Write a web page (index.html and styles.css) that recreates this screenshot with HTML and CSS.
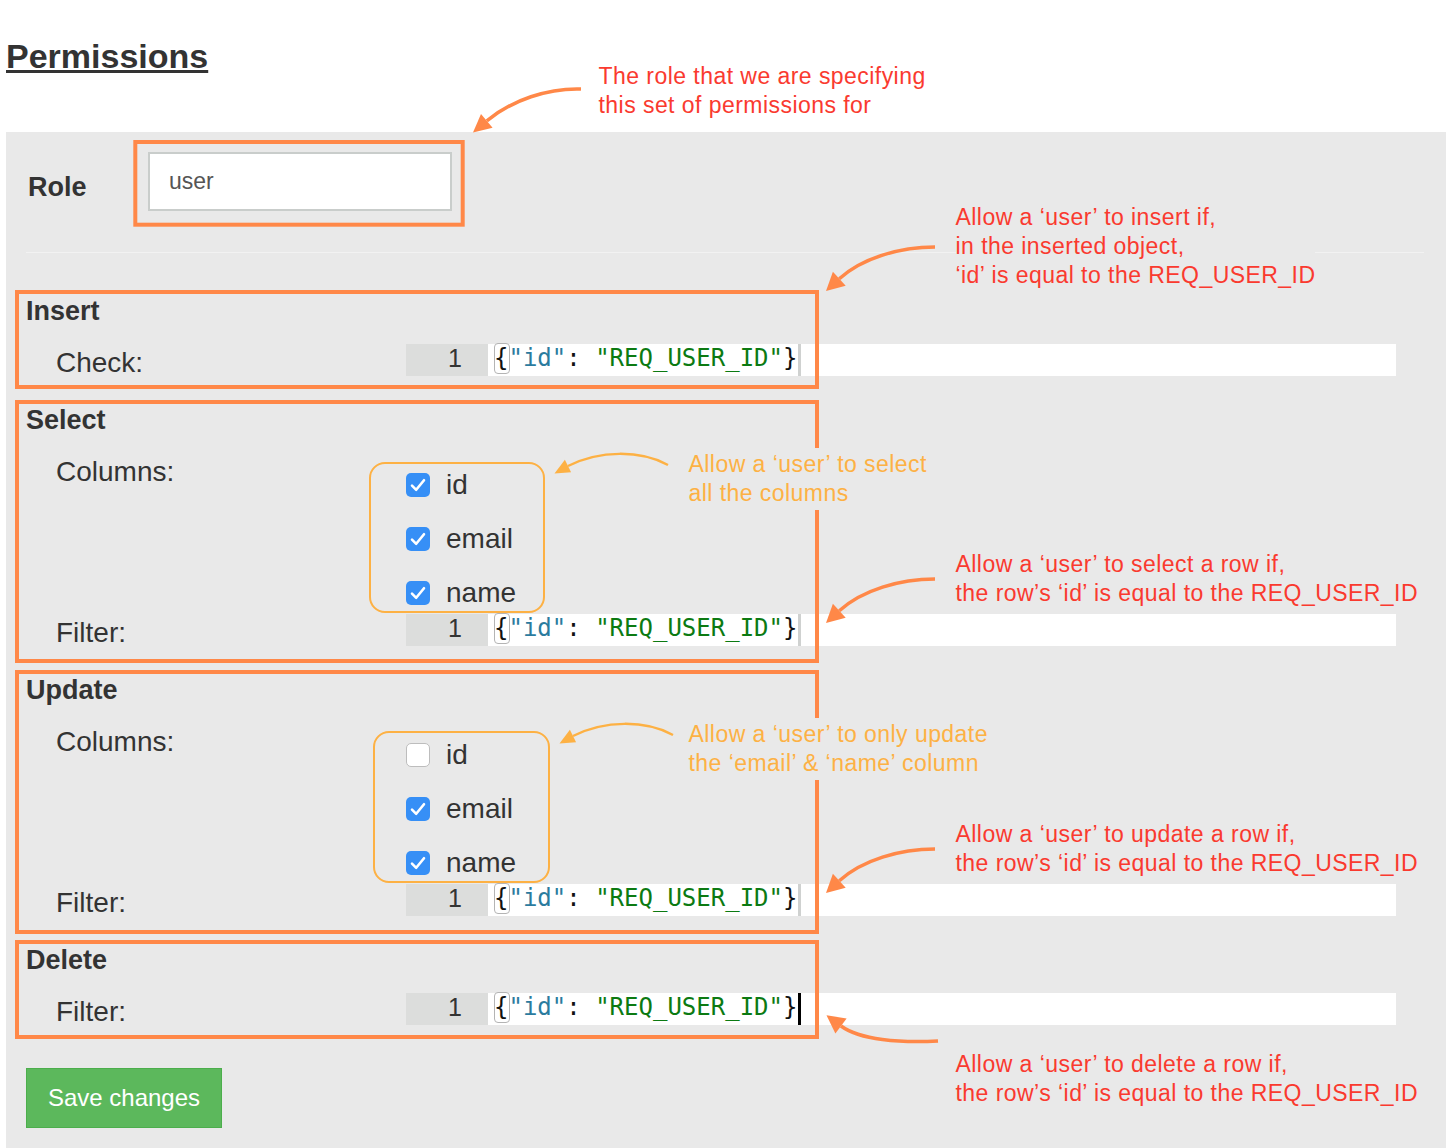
FILE: index.html
```html
<!DOCTYPE html>
<html lang="en">
<head>
<meta charset="utf-8">
<title>Permissions</title>
<link rel="stylesheet" href="styles.css">
</head>
<body>
<h1 class="page-title">Permissions</h1>

<form class="panel">
  <div class="role-row">
    <label class="role-label" for="role">Role</label>
    <input class="role-input" id="role" type="text" value="user">
  </div>
  <hr class="sep">

  <section class="perm perm-first">
    <h2 class="perm-title">Insert</h2>
    <div class="fields">
      <div class="field">
        <span class="field-label">Check:</span>
        <div class="editor">
          <div class="gutter">1</div>
          <div class="code"><span class="bracket">{</span><span class="prop">"id"</span>: <span class="str">"REQ_USER_ID"</span>}<span class="cursor"></span></div>
        </div>
      </div>
    </div>
  </section>

  <section class="perm">
    <h2 class="perm-title">Select</h2>
    <div class="fields">
      <div class="field">
        <span class="field-label">Columns:</span>
        <ul class="checks">
          <li class="check"><span class="box"><svg width="24" height="24" viewBox="0 0 24 24"><path d="M6 12.6 L10.2 16.8 L18 7.2" fill="none" stroke="#fff" stroke-width="2.6" stroke-linecap="round" stroke-linejoin="round"/></svg></span>id</li>
          <li class="check"><span class="box"><svg width="24" height="24" viewBox="0 0 24 24"><path d="M6 12.6 L10.2 16.8 L18 7.2" fill="none" stroke="#fff" stroke-width="2.6" stroke-linecap="round" stroke-linejoin="round"/></svg></span>email</li>
          <li class="check"><span class="box"><svg width="24" height="24" viewBox="0 0 24 24"><path d="M6 12.6 L10.2 16.8 L18 7.2" fill="none" stroke="#fff" stroke-width="2.6" stroke-linecap="round" stroke-linejoin="round"/></svg></span>name</li>
        </ul>
      </div>
      <div class="field">
        <span class="field-label">Filter:</span>
        <div class="editor">
          <div class="gutter">1</div>
          <div class="code"><span class="bracket">{</span><span class="prop">"id"</span>: <span class="str">"REQ_USER_ID"</span>}<span class="cursor"></span></div>
        </div>
      </div>
    </div>
  </section>

  <section class="perm">
    <h2 class="perm-title">Update</h2>
    <div class="fields">
      <div class="field">
        <span class="field-label">Columns:</span>
        <ul class="checks">
          <li class="check"><span class="box box-off"></span>id</li>
          <li class="check"><span class="box"><svg width="24" height="24" viewBox="0 0 24 24"><path d="M6 12.6 L10.2 16.8 L18 7.2" fill="none" stroke="#fff" stroke-width="2.6" stroke-linecap="round" stroke-linejoin="round"/></svg></span>email</li>
          <li class="check"><span class="box"><svg width="24" height="24" viewBox="0 0 24 24"><path d="M6 12.6 L10.2 16.8 L18 7.2" fill="none" stroke="#fff" stroke-width="2.6" stroke-linecap="round" stroke-linejoin="round"/></svg></span>name</li>
        </ul>
      </div>
      <div class="field">
        <span class="field-label">Filter:</span>
        <div class="editor">
          <div class="gutter">1</div>
          <div class="code"><span class="bracket">{</span><span class="prop">"id"</span>: <span class="str">"REQ_USER_ID"</span>}<span class="cursor"></span></div>
        </div>
      </div>
    </div>
  </section>

  <section class="perm">
    <h2 class="perm-title">Delete</h2>
    <div class="fields">
      <div class="field">
        <span class="field-label">Filter:</span>
        <div class="editor">
          <div class="gutter">1</div>
          <div class="code"><span class="bracket">{</span><span class="prop">"id"</span>: <span class="str">"REQ_USER_ID"</span>}<span class="cursor cursor-active"></span></div>
        </div>
      </div>
    </div>
  </section>

  <button class="save" type="button">Save changes</button>
</form>

<div class="overlay">
  <svg class="marks" width="1446" height="1148" viewBox="0 0 1446 1148">
    <g fill="none" stroke="#ff8848" stroke-width="4">
      <rect x="135.3" y="142" width="327.4" height="82.7"/>
      <rect x="17" y="292" width="800" height="95"/>
      <rect x="17" y="402" width="800" height="259"/>
      <rect x="17" y="672" width="800" height="260"/>
      <rect x="17" y="942" width="800" height="95"/>
    </g>
    <g fill="none" stroke="#fdb144" stroke-width="2">
      <rect x="370" y="463" width="174" height="149" rx="15"/>
      <rect x="374" y="732" width="175" height="150" rx="15"/>
    </g>
    <g fill="none" stroke="#ff8848" stroke-width="3.5">
      <path d="M581 89 C548 88 512 100 486.8 120.9"/>
      <path d="M935 247 C900 247 862 258 839.3 278.8"/>
      <path d="M935 579 C900 579 862 590 839.3 610.8"/>
      <path d="M935 849 C900 849 862 860 839.3 880.8"/>
      <path d="M938 1041 C900 1043 860 1040 841 1026"/>
    </g>
    <g fill="#ff8848">
      <polygon points="473,132.5 481,114 492.6,127.8"/>
      <polygon points="826,291 832.9,271.8 845.7,285.8"/>
      <polygon points="826,623 832.9,603.8 845.7,617.8"/>
      <polygon points="826,893 832.9,873.8 845.7,887.8"/>
      <polygon points="826.5,1015.3 846.6,1018.4 835.4,1033.6"/>
    </g>
    <g fill="none" stroke="#fdb144" stroke-width="2.5">
      <path d="M668 465 C640 450 600 450 568 466"/>
      <path d="M673 735 C645 720 605 720 573 736"/>
    </g>
    <g fill="#fdb144">
      <polygon points="554.5,473.5 564.9,459.7 571.1,472.3"/>
      <polygon points="559.5,743.5 569.9,729.7 576.1,742.3"/>
    </g>
  </svg>

  <p class="note note-red note-role">The role that we are specifying<br>this set of permissions for</p>
  <p class="note note-red note-panel note-insert">Allow a ‘user’ to insert if,<br>in the inserted object,<br>‘id’ is equal to the REQ_USER_ID</p>
  <p class="note note-yellow note-cols-select">Allow a ‘user’ to select<br>all the columns</p>
  <p class="note note-red note-panel note-select">Allow a ‘user’ to select a row if,<br>the row’s ‘id’ is equal to the REQ_USER_ID</p>
  <p class="note note-yellow note-cols-update">Allow a ‘user’ to only update<br>the ‘email’ &amp; ‘name’ column</p>
  <p class="note note-red note-panel note-update">Allow a ‘user’ to update a row if,<br>the row’s ‘id’ is equal to the REQ_USER_ID</p>
  <p class="note note-red note-panel note-delete">Allow a ‘user’ to delete a row if,<br>the row’s ‘id’ is equal to the REQ_USER_ID</p>
</div>
</body>
</html>
```

FILE: styles.css
```css
* {
  box-sizing: border-box;
}

html {
  margin: 0;
}

body {
  margin: 0 0 0 6px;
  background: #fff;
  font-family: "Liberation Sans", Arial, Helvetica, sans-serif;
  color: #333;
}

.page-title {
  margin: 35.5px 0 56.5px;
  font-size: 34px;
  line-height: 40px;
  font-weight: 700;
  color: #333;
  text-decoration: underline;
  text-decoration-thickness: 2.5px;
  text-underline-offset: 2px;
}

/* ---------- panel ---------- */
.panel {
  background: #e9e9e9;
  padding: 20px 50px 20px 20px;
}

.role-row {
  display: flex;
  align-items: flex-start;
}

.role-label {
  width: 120px;
  margin: 18px 0 0 2px;
  font-size: 27px;
  line-height: 34px;
  font-weight: 700;
  color: #333;
}

.role-input {
  width: 304px;
  height: 59px;
  margin: 0;
  padding: 0 19px;
  border: 2px solid #c9cdcb;
  border-radius: 0;
  background: #fff;
  font-family: "Liberation Sans", Arial, sans-serif;
  font-size: 23px;
  color: #555;
  outline: none;
}

.sep {
  height: 0;
  border: 0;
  border-top: 1px solid #f2f2f2;
  margin: 41px -28px 0 0;
}

.perm {
  margin-top: 22px;
}

.perm-first {
  margin-top: 41px;
}

.perm-title {
  margin: 0 0 16px;
  font-size: 27px;
  line-height: 34px;
  font-weight: 700;
  color: #333;
}

.fields {
  display: flex;
  flex-direction: column;
  gap: 5px;
}

.field {
  display: grid;
  grid-template-columns: 350px 1fr;
  align-items: start;
  padding-left: 30px;
}

.field-label {
  font-size: 28px;
  line-height: 37px;
  color: #333;
}

/* ---------- code editor ---------- */
.editor {
  display: flex;
  height: 32px;
  font-family: "DejaVu Sans Mono", "Liberation Mono", monospace;
  font-size: 24px;
}

.gutter {
  width: 82px;
  flex: none;
  background: #dcdddc;
  color: #333;
  text-align: right;
  padding-right: 26px;
  line-height: 29px;
  font-family: "Liberation Sans", Arial, sans-serif;
  font-size: 25px;
}

.code {
  flex: 1;
  background: #fff;
  padding-left: 6px;
  line-height: 29px;
  white-space: pre;
  color: #111;
}

.prop {
  color: #2b7b9e;
}

.str {
  color: #0c7a12;
}

.bracket {
  position: relative;
}

.bracket::before {
  content: "";
  position: absolute;
  left: -0.5px;
  width: 14.5px;
  top: -1px;
  bottom: -1.5px;
  border: 1px solid #b4b4b4;
  border-radius: 4px;
}

.cursor {
  display: inline-block;
  width: 3px;
  height: 32px;
  margin-left: 1px;
  vertical-align: top;
  background: #cfd1d0;
}

.cursor-active {
  background: #000;
}

/* ---------- checkboxes ---------- */
.checks {
  list-style: none;
  margin: 0;
  padding: 16px 0 0;
  display: flex;
  flex-direction: column;
  gap: 22px;
}

.check {
  display: flex;
  align-items: center;
  height: 32px;
  font-size: 28px;
  line-height: 32px;
  color: #333;
}

.box {
  width: 24px;
  height: 24px;
  flex: none;
  margin-right: 16px;
  border-radius: 5px;
  background: #368ff6;
  display: flex;
}

.box-off {
  background: #fff;
  border: 1px solid #bdbdbd;
}

/* ---------- button ---------- */
.save {
  display: block;
  margin-top: 38px;
  width: 196px;
  height: 60px;
  padding: 0;
  border: 1px solid #4cae4c;
  border-radius: 0;
  background: #5cb85c;
  color: #fff;
  font-family: "Liberation Sans", Arial, sans-serif;
  font-size: 24px;
}

/* ---------- annotation layer ---------- */
.overlay {
  position: absolute;
  left: 0;
  top: 0;
  width: 1446px;
  height: 1148px;
  pointer-events: none;
}

.marks {
  position: absolute;
  left: 0;
  top: 0;
}

.note {
  position: absolute;
  margin: 0;
  font-size: 23px;
  line-height: 29px;
  letter-spacing: 0.45px;
  white-space: nowrap;
}

.note-red {
  color: #fa3a2f;
}

.note-panel {
  background: #e9e9e9;
}

.note-yellow {
  color: #fdb144;
  background: #e9e9e9;
  padding: 2px 0;
}

.note-role {
  left: 598.5px;
  top: 62px;
}

.note-insert {
  left: 955.5px;
  top: 203px;
}

.note-select {
  left: 955.5px;
  top: 549.5px;
}

.note-update {
  left: 955.5px;
  top: 819.5px;
}

.note-delete {
  left: 955.5px;
  top: 1049.5px;
}

.note-cols-select {
  left: 688.5px;
  top: 447.5px;
}

.note-cols-update {
  left: 688.5px;
  top: 717.5px;
}
```
